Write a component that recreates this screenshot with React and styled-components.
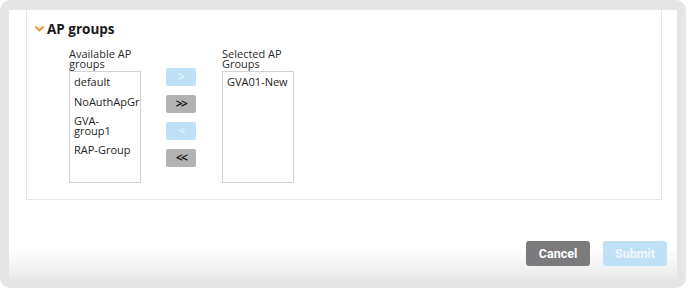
import React from 'react';
import styled, { createGlobalStyle } from 'styled-components';

const GlobalStyle = createGlobalStyle`
	html, body {
		margin: 0;
		padding: 0;
		background: #ffffff;
	}
	body {
		font-family: 'Open Sans', 'Liberation Sans', sans-serif;
		color: #222;
	}
`;

const Frame = styled.div`
	width: 686px;
	height: 288px;
	box-sizing: border-box;
	padding: 10px 9px 9px 9px;
	background: #e5e5e5;
	border-radius: 10px;
	display: flex;
`;

const Panel = styled.div`
	flex: 1;
	display: flex;
	flex-direction: column;
	overflow: hidden;
	background: linear-gradient(
		to bottom,
		#ffffff 0,
		#ffffff calc(100% - 30px),
		#e9e9e9 100%
	);
`;

const Section = styled.div`
	margin-left: 17px;
	width: 636px;
	box-sizing: border-box;
	border: 1px solid #e6e6e6;
	border-top: none;
	background: #fff;
	padding: 10px 8px 16px 8px;
`;

const Heading = styled.div`
	display: flex;
	align-items: center;
	gap: 3px;
	font-size: 13.5px;
	font-weight: 700;
	line-height: 18px;
	color: #1a1a1a;
	margin-bottom: 11px;
`;

const Chevron = styled.svg`
	width: 9px;
	height: 6px;
	margin-top: -1px;
`;

const Picker = styled.div`
	display: flex;
	align-items: flex-start;
	padding-left: 34px;
`;

const Column = styled.div`
	display: flex;
	flex-direction: column;
	width: 72px;
`;

const Label = styled.div`
	font-size: 11px;
	line-height: 9.5px;
	color: #2a2a2a;
	margin-bottom: 3px;
`;

const ListBox = styled.div`
	height: 112px;
	box-sizing: border-box;
	border: 1px solid #d2d2d2;
	overflow: hidden;
	padding: 0 ${p => p.$gutter || 0}px 0 0;
`;

const Item = styled.div`
	font-size: 11px;
	line-height: 9.5px;
	padding: 5px 0 5px 4px;
	color: #222;
	white-space: ${p => (p.$nowrap ? 'nowrap' : 'normal')};
`;

const Movers = styled.div`
	display: flex;
	flex-direction: column;
	gap: 9px;
	margin: 19px 26px 0 25px;
`;

const MoveButton = styled.button`
	width: 30px;
	height: 18px;
	padding: 0;
	border: none;
	border-radius: 2px;
	background: ${p => (p.$active ? '#b2b2b2' : '#bfe1f7')};
	color: ${p => (p.$active ? '#1c1c1c' : '#e3f2fc')};
	font-family: 'Open Sans', 'Liberation Sans', sans-serif;
	font-size: 12px;
	font-weight: 700;
	letter-spacing: -1.5px;
	line-height: 18px;
	display: flex;
	align-items: center;
	justify-content: center;
`;

const Footer = styled.div`
	flex: 1;
	display: flex;
	justify-content: flex-end;
	align-items: flex-start;
	gap: 13px;
	padding: 41px 10px 0 0;
`;

const ActionButton = styled.button`
	width: 64px;
	height: 25px;
	border: none;
	border-radius: 3px;
	background: ${p => (p.$primary ? '#bfe1f7' : '#7b7b7d')};
	color: ${p => (p.$primary ? '#eef7fd' : '#ffffff')};
	font-family: Roboto, 'Liberation Sans', sans-serif;
	font-size: 12.5px;
	font-weight: 700;
	padding: 0;
`;

const available = [
	{ name: 'default' },
	{ name: 'NoAuthApGr', nowrap: true },
	{ name: 'GVA-group1' },
	{ name: 'RAP-Group' }
];

const selected = ['GVA01-New'];

export default function App() {
	return (
		<>
			<GlobalStyle />
			<Frame>
				<Panel>
					<Section>
						<Heading>
							<Chevron viewBox="0 0 9 6">
								<path
									d="M1 1 L4.5 4.6 L8 1"
									fill="none"
									stroke="#f08a24"
									strokeWidth="1.8"
									strokeLinecap="round"
									strokeLinejoin="round"
								/>
							</Chevron>
							AP groups
						</Heading>
						<Picker>
							<Column>
								<Label>Available AP groups</Label>
								<ListBox $gutter={8}>
									{available.map(g => (
										<Item key={g.name} $nowrap={g.nowrap}>
											{g.name}
										</Item>
									))}
								</ListBox>
							</Column>
							<Movers>
								<MoveButton>&gt;</MoveButton>
								<MoveButton $active>&gt;&gt;</MoveButton>
								<MoveButton>&lt;</MoveButton>
								<MoveButton $active>&lt;&lt;</MoveButton>
							</Movers>
							<Column>
								<Label>Selected AP Groups</Label>
								<ListBox>
									{selected.map(g => (
										<Item key={g} $nowrap>
											{g}
										</Item>
									))}
								</ListBox>
							</Column>
						</Picker>
					</Section>
					<Footer>
						<ActionButton>Cancel</ActionButton>
						<ActionButton $primary>Submit</ActionButton>
					</Footer>
				</Panel>
			</Frame>
		</>
	);
}
